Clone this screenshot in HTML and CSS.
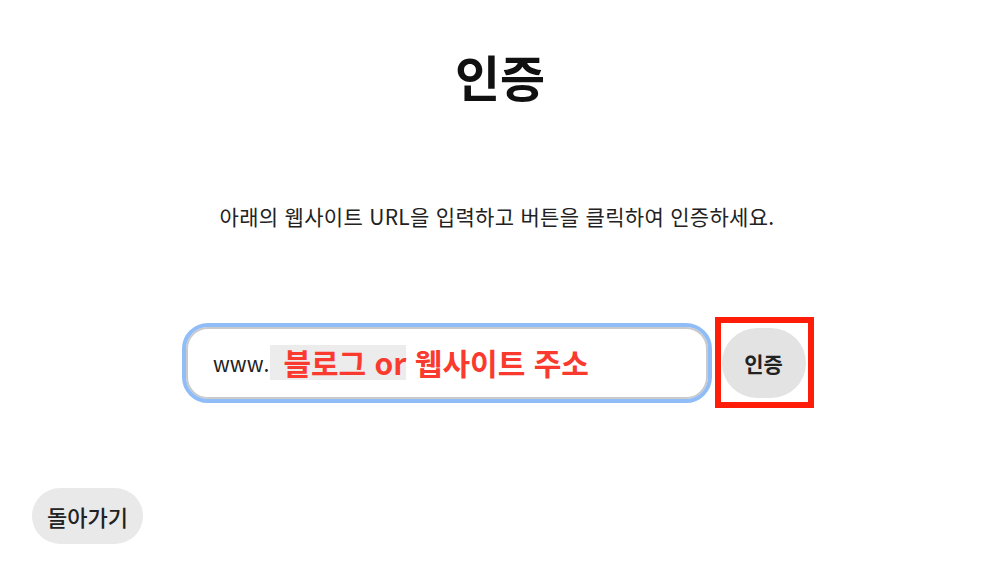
FILE: index.html
```html
<!DOCTYPE html>
<html lang="ko">
<head>
<meta charset="utf-8">
<title>인증</title>
<link rel="stylesheet" href="styles.css">
</head>
<body>
<div class="page">
  <h1 class="title">인증</h1>
  <p class="desc">아래의 웹사이트 URL을 입력하고 버튼을 클릭하여 인증하세요.</p>
  <div class="row">
    <div class="field">
      <span class="prefix">www.</span><span class="hl">블로그 or</span><span class="hint">&nbsp;웹사이트 주소</span>
    </div>
    <div class="mark">
      <button class="verify">인증</button>
    </div>
  </div>
  <button class="back">돌아가기</button>
</div>
</body>
</html>
```
FILE: styles.css
```css
html, body {
  margin: 0;
  padding: 0;
  background: #ffffff;
}
body {
  font-family: "Noto Sans CJK KR", "Noto Sans", sans-serif;
  color: #1a1a1a;
}
.page {
  width: 1000px;
  height: 581px;
  display: flex;
  flex-direction: column;
  align-items: center;
  box-sizing: border-box;
  padding-top: 46px;
}
.title {
  margin: 0;
  font-size: 49px;
  line-height: 60px;
  font-weight: 700;
  color: #111;
}
.desc {
  margin: 97px 0 0;
  font-size: 21px;
  line-height: 26px;
  letter-spacing: 0.3px;
  color: #222;
  padding-right: 6px;
}
.row {
  margin-top: 88px;
  display: flex;
  align-items: center;
  gap: 7px;
}
.field {
  width: 522px;
  height: 72px;
  box-sizing: border-box;
  border: 2px solid #cacaca;
  border-radius: 22px;
  outline: 4px solid #90bdf8;
  display: flex;
  align-items: center;
  padding-left: 25px;
  white-space: nowrap;
}
.prefix {
  font-size: 21px;
  color: #222;
  margin-right: 1px;
}
.hl {
  background: #ececec;
  padding-left: 13px;
  font-size: 30px;
  line-height: 35px;
  font-weight: 700;
  color: #fa3a2e;
}
.hint {
  font-size: 30px;
  line-height: 35px;
  font-weight: 700;
  color: #fa3a2e;
}
.mark {
  width: 99px;
  height: 91px;
  box-sizing: border-box;
  border: 6px solid #ff1d0a;
  display: flex;
  align-items: center;
  justify-content: center;
  padding-right: 2px;
}
.verify {
  width: 84px;
  height: 70px;
  border: none;
  border-radius: 35px;
  background: #e3e3e3;
  font-family: inherit;
  font-size: 21px;
  font-weight: 700;
  color: #222;
  padding: 0;
}
.back {
  align-self: flex-start;
  margin: 80px 0 0 32px;
  width: 111px;
  height: 56px;
  border: none;
  border-radius: 28px;
  background: #e9e9e9;
  font-family: inherit;
  font-size: 22px;
  font-weight: 500;
  color: #222;
  padding: 0;
}
```
